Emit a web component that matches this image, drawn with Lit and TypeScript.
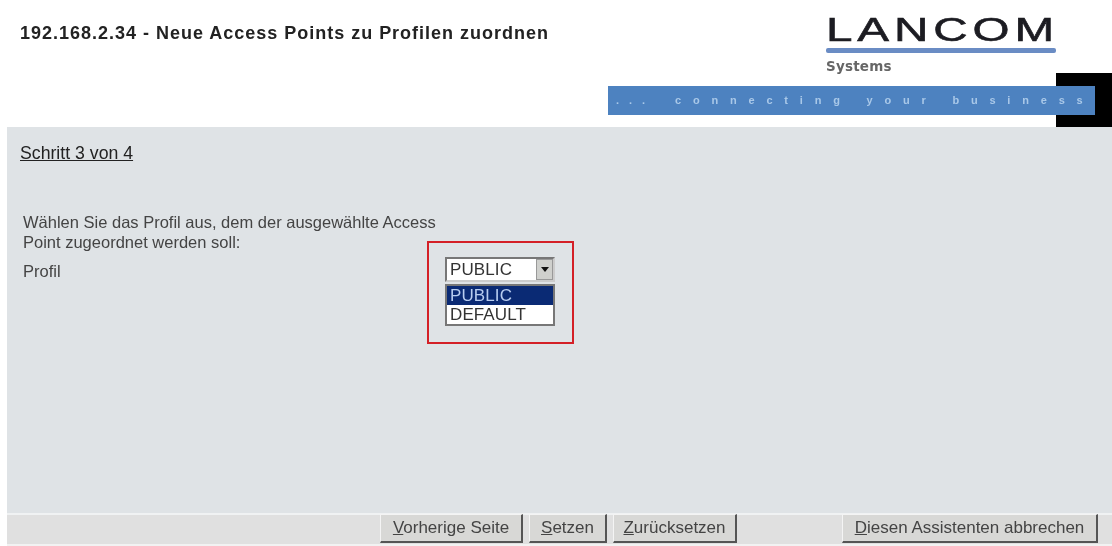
import { LitElement, html, css } from "lit";
import { customElement } from "lit/decorators.js";

@customElement("app-root")
export class AppRoot extends LitElement {
  static styles = css`
    :host { display: flex; flex-direction: column; width: 1112px; height: 546px; background: #fff; font-family: "Liberation Sans", Arial, sans-serif; color: #333; overflow: hidden; position: relative; }
    .header { height: 127px; flex: none; display: flex; justify-content: space-between; position: relative; box-sizing: border-box; }
    .title { margin: 23px 0 0 20px; font-size: 18px; font-weight: 700; color: #222; letter-spacing: 0.99px; line-height: 20px; white-space: nowrap; filter: blur(0.4px); }
    .brand { width: 504px; display: flex; flex-direction: column; align-items: flex-start; }
    .logo { margin: 11px 0 0 218px; width: 230px; }
    .word { font-size: 34px; line-height: 37px; height: 37px; color: #1c1c22; letter-spacing: 3.5px; white-space: nowrap; transform: scaleX(1.4); transform-origin: left; font-weight: 400; -webkit-text-stroke: 0.6px #1c1c22; filter: blur(0.4px); }
    .rule { height: 5px; background: #6a8cc4; border-radius: 2px; }
    .sys { font-family: "DejaVu Sans", sans-serif; font-size: 13.5px; line-height: 16px; margin-top: 5px; color: #666; font-weight: 700; filter: blur(0.4px); letter-spacing: 0.2px; }
    .band { margin: 12px 0 0 0; width: 487px; height: 29px; background: #4d82c0; color: #a9c8e8; font-size: 11px; font-weight: 700; line-height: 29px; display: flex; box-sizing: border-box; padding-left: 8px; white-space: nowrap; position: relative; z-index: 1; filter: blur(0.4px); }
    .dots { width: 59px; letter-spacing: 10px; }
    .tag { letter-spacing: 11.8px; }
    .black { position: absolute; left: 1056px; top: 73px; width: 56px; height: 54px; background: #000; }
    .main { flex: 1; margin-left: 7px; background: #dfe3e6; padding: 17px 0 0 13px; color: #444; filter: blur(0.4px); min-height: 0; box-sizing: border-box; }
    .step { color: #222; text-decoration: underline; font-size: 17.7px; line-height: 18px; }
    .intro { margin: 50px 0 0 3px; width: 430px; line-height: 20px; font-size: 16.5px; }
    .row { display: flex; margin: 9px 0 0 3px; line-height: 20px; font-size: 16.5px; }
    .lab { width: 422px; }
    .sel { position: relative; width: 110px; height: 25px; margin-top: -4px; box-sizing: border-box; background: #fff; border: 2px solid #777; border-right-color: #ccc; border-bottom-color: #ccc; font-size: 17px; color: #333; display: flex; justify-content: space-between; }
    .val { padding-left: 3px; line-height: 21px; letter-spacing: 0.1px; }
    .arrow { width: 17px; background: #cfd0cd; border: 1px solid #999; box-sizing: border-box; display: flex; align-items: center; justify-content: center; }
    .tri { width: 0; height: 0; border: 4px solid transparent; border-top: 5px solid #111; border-bottom: 0; }
    .pop { position: absolute; left: -2px; top: 25px; width: 110px; box-sizing: border-box; border: 2px solid #777; background: #fff; font-size: 17px; line-height: 19px; z-index: 2; }
    .opt { padding-left: 3px; height: 19px; color: #333; letter-spacing: 0.1px; }
    .opt.on { background: #0a2a74; color: #b8cdf0; }
    .mark { position: absolute; left: 427px; top: 241px; width: 147px; height: 103px; box-sizing: border-box; border: 2px solid #d42027; pointer-events: none; filter: blur(0.3px); }
    .footer { flex: none; height: 33px; margin-left: 7px; background: #e0e0e0; border-top: 2px solid #f0f2f3; border-bottom: 2px solid #f2f2f2; display: flex; align-items: flex-start; box-sizing: border-box; filter: blur(0.4px); }
    .btn { height: 29px; margin-top: -1px; line-height: 26px; box-sizing: border-box; background: #d8d8d6; border: 1px solid #f4f4f4; border-right: 2px solid #555; border-bottom: 2px solid #555; color: #444; text-align: center; white-space: nowrap; font-size: 17px; }
    .b1 { width: 143px; margin-left: 373px; }
    .b2 { width: 78px; margin-left: 6px; }
    .b3 { width: 124px; margin-left: 6px; }
    .b4 { width: 256px; margin-left: 105px; }
  `;
  render() {
    return html`
      <div class="header">
        <div class="title">192.168.2.34 - Neue Access Points zu Profilen zuordnen</div>
        <div class="brand">
          <div class="logo">
            <div class="word">LANCOM</div>
            <div class="rule"></div>
            <div class="sys">Systems</div>
          </div>
          <div class="band"><span class="dots">...</span><span class="tag">connecting your business</span></div>
        </div>
        <div class="black"></div>
      </div>
      <div class="main">
        <div class="step">Schritt 3 von 4</div>
        <div class="intro">Wählen Sie das Profil aus, dem der ausgewählte Access Point zugeordnet werden soll:</div>
        <div class="row">
          <div class="lab">Profil</div>
          <div class="sel">
            <span class="val">PUBLIC</span>
            <span class="arrow"><span class="tri"></span></span>
            <div class="pop">
              <div class="opt on">PUBLIC</div>
              <div class="opt">DEFAULT</div>
            </div>
          </div>
        </div>
      </div>
      <div class="footer">
        <div class="btn b1"><u>V</u>orherige Seite</div>
        <div class="btn b2"><u>S</u>etzen</div>
        <div class="btn b3"><u>Z</u>urücksetzen</div>
        <div class="btn b4"><u>D</u>iesen Assistenten abbrechen</div>
      </div>
      <div class="mark"></div>
    `;
  }
}
